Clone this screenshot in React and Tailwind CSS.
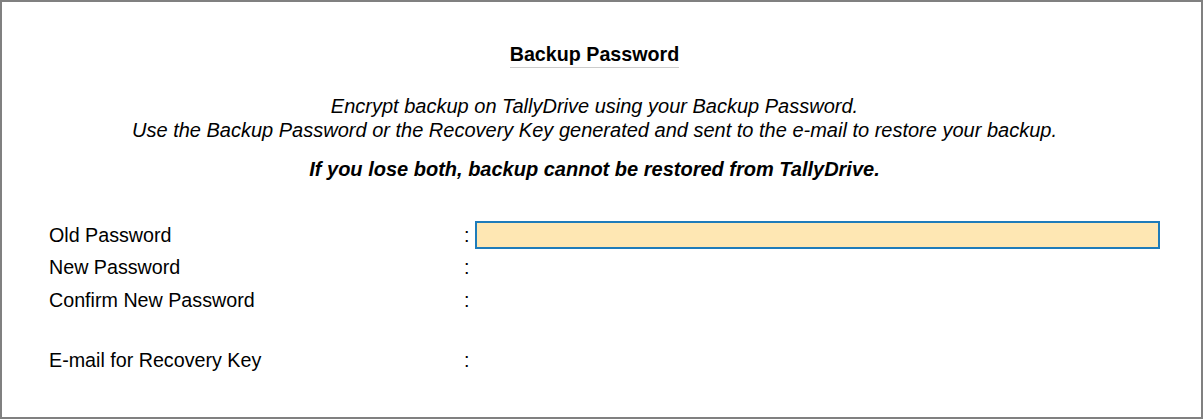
const fields = [
  { label: 'Old Password', active: true },
  { label: 'New Password' },
  { label: 'Confirm New Password' },
  { spacer: true },
  { label: 'E-mail for Recovery Key' },
];

export default function App() {
  return (
    <div
      className="w-[1203px] h-[419px] bg-white border-2 border-[#808080] text-black overflow-hidden"
      style={{ fontFamily: '"Liberation Sans", Arial, sans-serif' }}
    >
      {/* Header and notes */}
      <div className="flex flex-col items-center pr-[14px] pt-[40px]">
        <h1 className="inline-block text-[19.7px] leading-[24px] font-bold border-b border-[#cccccc] pb-[1px]">
          Backup Password
        </h1>
        <p className="mt-[26px] text-[20px] leading-[24px] italic text-center">
          Encrypt backup on TallyDrive using your Backup Password.
          <br />
          Use the Backup Password or the Recovery Key generated and sent to the e-mail to restore your backup.
        </p>
        <p className="mt-[15px] text-[20px] leading-[24px] italic font-bold text-center">
          If you lose both, backup cannot be restored from TallyDrive.
        </p>
      </div>

      {/* Form rows */}
      <div className="mt-[37.5px] pl-[47px] text-[19.7px]">
        {fields.map((f, i) =>
          f.spacer ? (
            <div key={i} className="h-[27.3px]" />
          ) : (
            <div key={i} className="flex items-center h-[32.7px] leading-[32.7px]">
              <div className="w-[415px] whitespace-nowrap">{f.label}</div>
              <div className="w-[6px]">:</div>
              {f.active && (
                <div className="ml-[5px] w-[685px] h-[27.5px] bg-[#fee7b3] border-2 border-[#1e7cba]" />
              )}
            </div>
          )
        )}
      </div>
    </div>
  );
}
